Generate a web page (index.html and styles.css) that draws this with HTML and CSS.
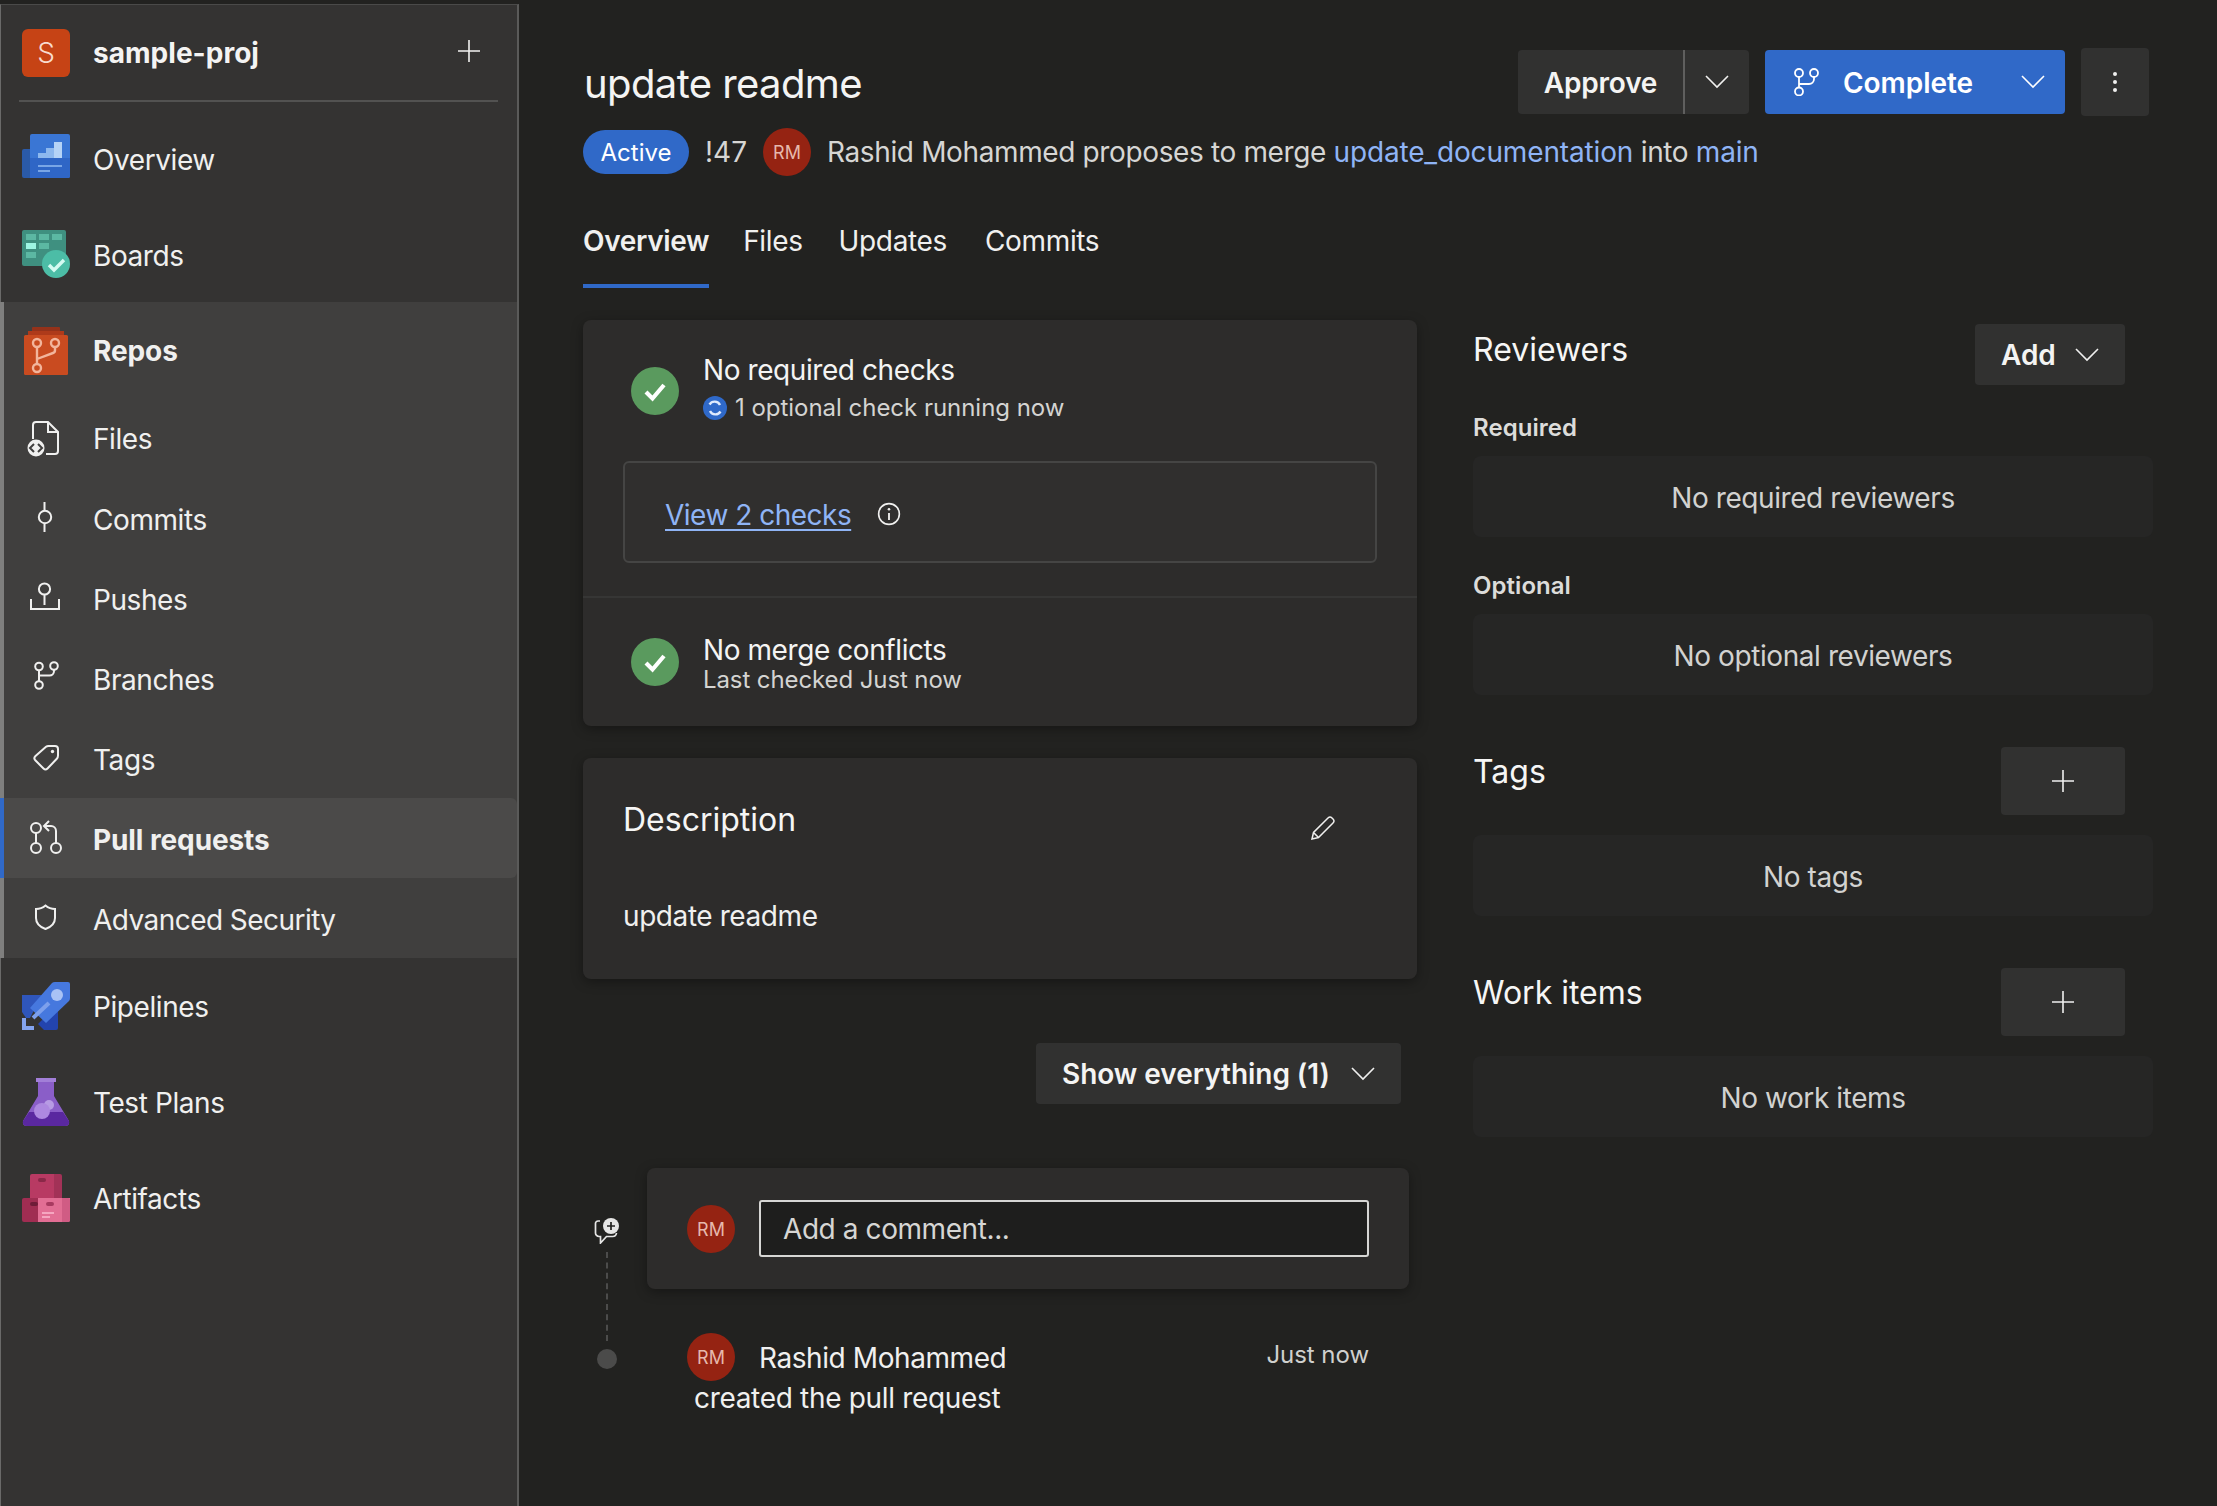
FILE: index.html
```html
<!DOCTYPE html>
<html lang="en">
<head>
<meta charset="utf-8">
<title>update readme</title>
<link rel="stylesheet" href="styles.css">
</head>
<body>
<div class="app">
  <nav class="sidebar">
    <div class="project">
      <div class="logo">S</div>
      <div class="project-name">sample-proj</div>
      <svg class="project-add" viewBox="0 0 24 24"><path d="M12 1v22M1 12h22" stroke="#f2f2f1" stroke-width="1.6" fill="none"/></svg>
    </div>
    <div class="nav-top">
      <a class="nav-row"><svg class="ic" viewBox="0 0 48 48"><path d="M2 15h7v29H2a2 2 0 0 1-2-2V17a2 2 0 0 1 2-2z" fill="#2a5aa8"/><rect x="8" y="0" width="40" height="44" rx="2" fill="#3a76d4"/><path d="M8 24h40v18a2 2 0 0 1-2 2H8z" fill="#2f66c6"/><path d="M16 19h8v5h-8zM24 14h8v10h-8z" fill="#8db8ee"/><path d="M32 8h8v16h-8z" fill="#b5d3f6"/><path d="M16 31h24v2H16z" fill="#79a6e6"/><path d="M16 36h12v2H16z" fill="#79a6e6"/></svg><span>Overview</span></a>
      <a class="nav-row"><svg class="ic" viewBox="0 0 48 48"><rect x="0" y="0" width="44" height="36" rx="2" fill="#3f9080"/><path d="M4 4h10v6H4zM17 4h10v6H17zM30 4h10v6H30zM17 13h10v6H17zM4 22h10v6H4z" fill="#5cb8a3"/><path d="M4 13h10v6H4z" fill="#9ef5e3"/><circle cx="34" cy="34" r="14" fill="#4cbda6"/><path d="M27 35l5 5 10-10" fill="none" stroke="#d4fbf2" stroke-width="3.4"/></svg><span>Boards</span></a>
    </div>
    <div class="nav-section">
      <a class="nav-row head"><svg class="ic" viewBox="0 0 48 48"><path d="M10 1a1 1 0 0 1 1-1h26a1 1 0 0 1 1 1v5H10z" fill="#94321a"/><path d="M6 4h36v4H6z" fill="#ae3a1a"/><rect x="2" y="8" width="44" height="40" rx="1.5" fill="#c94b20"/><g fill="none" stroke="#f2b59c" stroke-width="2.4"><circle cx="15" cy="16" r="4"/><circle cx="33" cy="16" r="4"/><circle cx="15" cy="41" r="4"/><path d="M15 20v17M33 20v3a3 3 0 0 1-2 3l-16 6"/></g></svg><span>Repos</span></a>
      <a class="nav-row sub files"><svg class="ic" viewBox="0 0 48 48"><path d="M11 24V10a3 3 0 0 1 3-3h12l10 10v19a3 3 0 0 1-3 3h-9M26 7v10h10" fill="none" stroke="#f0f0ef" stroke-width="2"/><circle cx="14" cy="33" r="8.5" fill="#f0f0ef"/><path d="M12 29l-4 4 4 4M16 29l4 4-4 4" fill="none" stroke="#403f3e" stroke-width="2"/></svg><span>Files</span></a>
      <a class="nav-row sub"><svg class="ic" viewBox="0 0 48 48"><circle cx="23" cy="23" r="6.2" fill="none" stroke="#f0f0ef" stroke-width="2"/><path d="M22.5 8v9M22.5 29v9" stroke="#f0f0ef" stroke-width="2"/></svg><span>Commits</span></a>
      <a class="nav-row sub"><svg class="ic" viewBox="0 0 48 48"><circle cx="22.5" cy="15" r="5.6" fill="none" stroke="#f0f0ef" stroke-width="2"/><path d="M22.5 21v10M9 25v10h28V25" fill="none" stroke="#f0f0ef" stroke-width="2"/></svg><span>Pushes</span></a>
      <a class="nav-row sub"><svg class="ic" viewBox="0 0 48 48"><g fill="none" stroke="#f0f0ef" stroke-width="2"><circle cx="17" cy="12.5" r="3.8"/><circle cx="32" cy="12" r="3.8"/><circle cx="17" cy="31" r="3.8"/><path d="M17 16.500v10.700M32 16v1a4.500 4.500 0 0 1-4.500 4.500H17"/></g></svg><span>Branches</span></a>
      <a class="nav-row sub"><svg class="ic" viewBox="0 0 48 48"><path d="M13.500 22L24 12.800q1-.8 2.500-.8H33q3 0 3 3v6.500q0 2-1.200 3.300L25.500 34.500q-2 2-4 0l-8.200-8.200q-2-2.200.2-4.300z" fill="none" stroke="#f0f0ef" stroke-width="2"/><circle cx="30.500" cy="17.500" r="1.700" fill="#f0f0ef"/></svg><span>Tags</span></a>
      <a class="nav-row sub active"><svg class="ic" viewBox="0 0 48 48"><g fill="none" stroke="#f0f0ef" stroke-width="2"><circle cx="14" cy="14" r="5"/><circle cx="14" cy="34" r="5"/><circle cx="34" cy="34" r="5"/><path d="M14 19v10M34 29V17a5 5 0 0 0-5-5h-7M27 7l-5 5 5 5"/></g></svg><span>Pull requests</span></a>
      <a class="nav-row sub security"><svg class="ic" viewBox="0 0 48 48"><path d="M23.500 11.500c3 2.500 6 3.500 9.500 3.500v9c0 5-4 9-9.500 11-5.500-2-9.500-6-9.500-11v-9c3.500 0 6.500-1 9.500-3.500z" fill="none" stroke="#f0f0ef" stroke-width="2"/></svg><span>Advanced Security</span></a>
    </div>
    <div class="nav-bottom">
      <a class="nav-row"><svg class="ic" viewBox="0 0 48 48"><path d="M0 13h20L8 36H4L0 30z" fill="#2f56bb"/><path d="M36 22v24a2 2 0 0 1-2 2H22l-6-6z" fill="#2344ae"/><path d="M30 1q1-1 3-1h13q2 0 2 2v14q0 2-1 3L24 41 8 26z" fill="#4678de"/><circle cx="35" cy="13" r="6" fill="#a9c2f5"/><path d="M11 36l16-15" stroke="#7da0ec" stroke-width="4"/><path d="M0 36h4v8h8v4H0z" fill="#84a4ee"/></svg><span>Pipelines</span></a>
      <a class="nav-row"><svg class="ic" viewBox="0 0 48 48"><path d="M16 3h16v15l15 25q1 5-4 5H5q-5 0-4-5l15-25z" fill="#8a5ec8"/><path d="M7 34h34l6 9q1 5-4 5H5q-5 0-4-5z" fill="#5a28a0"/><rect x="14" y="0" width="20" height="4" fill="#a27fd8"/><circle cx="27" cy="27" r="5" fill="#b79be4"/><circle cx="20" cy="33" r="8" fill="#ad88e0"/></svg><span>Test Plans</span></a>
      <a class="nav-row"><svg class="ic" viewBox="0 0 48 48"><path d="M10 0h24v24H8V2a2 2 0 0 1 2-2z" fill="#b83a63"/><path d="M32 0h6a2 2 0 0 1 2 2v22h-8z" fill="#a23257"/><rect x="16" y="4" width="8" height="4" rx="2" fill="#8a2848"/><path d="M2 24h15v24H2a2 2 0 0 1-2-2V26a2 2 0 0 1 2-2z" fill="#a02d52"/><path d="M16 24h32v22a2 2 0 0 1-2 2H16z" fill="#e26e94"/><path d="M40 24h6a2 2 0 0 1 2 2v20a2 2 0 0 1-2 2h-6z" fill="#d05c84"/><rect x="8" y="28" width="8" height="4" rx="2" fill="#6e1c38"/><rect x="24" y="28" width="8" height="4" rx="2" fill="#a83a60"/><path d="M20 38h12v2H20zM20 42h8v2h-8z" fill="#f5a6c0"/></svg><span>Artifacts</span></a>
    </div>
  </nav>

  <main class="main">
    <header class="pr-head">
      <h1 class="pr-title">update readme</h1>
      <div class="actions">
        <div class="btn split">
          <span class="split-main"><span class="nudge">Approve</span></span>
          <span class="split-caret"><svg class="chev" viewBox="0 0 24 14"><path d="M1 1l11 11L23 1" fill="none" stroke="#f0f0ef" stroke-width="1.600"/></svg></span>
        </div>
        <div class="btn primary">
          <svg class="branch" viewBox="0 0 25 28"><g fill="none" stroke="#fff" stroke-width="1.800"><circle cx="5" cy="5" r="4"/><circle cx="20" cy="5" r="4"/><circle cx="5" cy="23.500" r="4"/><path d="M5 9v10.500M20 9v2a5 5 0 0 1-5 5H5"/></g></svg>
          <span class="primary-label"><span class="nudge">Complete</span></span>
          <svg class="chev" viewBox="0 0 24 14"><path d="M1 1l11 11L23 1" fill="none" stroke="#fff" stroke-width="1.600"/></svg>
        </div>
        <div class="btn more"><svg class="dots" viewBox="0 0 6 24"><circle cx="3" cy="4" r="2" fill="#f0f0ef"/><circle cx="3" cy="12" r="2" fill="#f0f0ef"/><circle cx="3" cy="20" r="2" fill="#f0f0ef"/></svg></div>
      </div>
    </header>

    <div class="pr-meta">
      <span class="badge">Active</span>
      <span class="pr-id">!47</span>
      <span class="avatar">RM</span>
      <span class="pr-desc">Rashid Mohammed proposes to merge <a class="link">update_documentation</a> into <a class="link">main</a></span>
    </div>

    <div class="tabs">
      <a class="tab current">Overview</a>
      <a class="tab t-files">Files</a>
      <a class="tab t-updates">Updates</a>
      <a class="tab t-commits">Commits</a>
    </div>

    <div class="columns">
      <section class="left">
        <div class="card checks">
          <div class="checks-top">
            <div class="status-row">
              <svg class="ok" viewBox="0 0 48 48"><circle cx="24" cy="24" r="24" fill="#5a9a5e"/><path d="M15 25l6.500 6.500L33 18" fill="none" stroke="#fff" stroke-width="4.200"/></svg>
              <div>
                <div class="status-title">No required checks</div>
                <div class="status-sub"><svg class="spin" viewBox="0 0 24 24"><circle cx="12" cy="12" r="12" fill="#2f69c9"/><path d="M17 9a6 6 0 0 0-10.500-.5M7 15a6 6 0 0 0 10.500.5" fill="none" stroke="#dfeafd" stroke-width="2.400"/></svg>1 optional check running now</div>
              </div>
            </div>
            <div class="checks-box">
              <a class="view-link">View 2 checks</a>
              <svg class="info" viewBox="0 0 22 22"><circle cx="11" cy="11" r="9.500" fill="none" stroke="#f0f0ef" stroke-width="1.500"/><path d="M11 10v6.500" stroke="#f0f0ef" stroke-width="1.700"/><circle cx="11" cy="6.700" r="1.200" fill="#f0f0ef"/></svg>
            </div>
          </div>
          <div class="status-row merge">
            <svg class="ok up" viewBox="0 0 48 48"><circle cx="24" cy="24" r="24" fill="#5a9a5e"/><path d="M15 25l6.500 6.500L33 18" fill="none" stroke="#fff" stroke-width="4.200"/></svg>
            <div>
              <div class="status-title tight">No merge conflicts</div>
              <div class="status-sub tight">Last checked Just now</div>
            </div>
          </div>
        </div>

        <div class="card description">
          <div class="desc-head">
            <h2 class="heading">Description</h2>
            <svg class="pencil" viewBox="0 0 26 26"><path d="M2 24l1.500-6.500L18 3q2-2 4 0l1 1q2 2 0 4L8.500 22.500zM3.500 17.500l5 5" fill="none" stroke="#f0f0ef" stroke-width="1.500"/></svg>
          </div>
          <p class="desc-text">update readme</p>
        </div>

        <div class="filter-row">
          <div class="btn filter"><span>Show everything (1)</span><svg class="chev" viewBox="0 0 24 14"><path d="M1 1l11 11L23 1" fill="none" stroke="#f0f0ef" stroke-width="1.600"/></svg></div>
        </div>

        <div class="timeline">
          <div class="rail">
            <svg class="rail-icon" viewBox="0 0 26 26"><path d="M6 3H4a2.500 2.500 0 0 0-2.500 2.500V15A3.500 3.500 0 0 0 5 18.500h1.500V25l6-6.500h6a4 4 0 0 0 4-3.500" fill="none" stroke="#e6e6e5" stroke-width="1.700"/><circle cx="17" cy="8" r="8" fill="#e6e6e5"/><path d="M17 4v8M13 8h8" stroke="#222220" stroke-width="1.700"/></svg>
            <div class="rail-line"></div>
            <div class="rail-dot"></div>
          </div>
          <div class="thread">
            <div class="card comment">
              <span class="avatar">RM</span>
              <div class="comment-input">Add a comment...</div>
            </div>
            <div class="activity">
              <div class="activity-top">
                <span class="avatar">RM</span>
                <span class="activity-name">Rashid Mohammed</span>
                <span class="activity-time">Just now</span>
              </div>
              <div class="activity-text">created the pull request</div>
            </div>
          </div>
        </div>
      </section>

      <aside class="right">
        <div class="side-head">
          <h2 class="heading side-title">Reviewers</h2>
          <div class="btn add"><span>Add</span><svg class="chev" viewBox="0 0 24 14"><path d="M1 1l11 11L23 1" fill="none" stroke="#f0f0ef" stroke-width="1.600"/></svg></div>
        </div>
        <div class="side-label">Required</div>
        <div class="empty first">No required reviewers</div>
        <div class="side-label later">Optional</div>
        <div class="empty first">No optional reviewers</div>

        <div class="side-head block">
          <h2 class="heading side-title small">Tags</h2>
          <div class="btn plus"><svg class="plus-ic" viewBox="0 0 24 24"><path d="M12 1v22M1 12h22" stroke="#f0f0ef" stroke-width="1.600"/></svg></div>
        </div>
        <div class="empty">No tags</div>

        <div class="side-head block">
          <h2 class="heading side-title small">Work items</h2>
          <div class="btn plus"><svg class="plus-ic" viewBox="0 0 24 24"><path d="M12 1v22M1 12h22" stroke="#f0f0ef" stroke-width="1.600"/></svg></div>
        </div>
        <div class="empty">No work items</div>
      </aside>
    </div>
  </main>
</div>
</body>
</html>
```

FILE: styles.css
```css
* { box-sizing: border-box; }
html, body { margin: 0; height: 100%; }
body {
  background: #222220;
  color: #f0f0ef;
  font-family: Inter, "Liberation Sans", sans-serif;
  font-size: 28px;
  letter-spacing: -0.42px;
  overflow: hidden;
}
.app {
  display: grid;
  grid-template-columns: 519px 1fr;
  height: 1506px;
  padding-top: 4px;
  background: #222220;
}

/* sidebar */
.sidebar {
  background: #343332;
  border-top: 1px solid #4a4a49;
  border-left: 1px solid #6a6a69;
  border-right: 2px solid #5a5a59;
  display: flex;
  flex-direction: column;
  height: 1502px;
}
.project {
  display: flex;
  align-items: center;
  height: 97px;
  margin: 0 19px 0 18px;
  padding-left: 3px;
  border-bottom: 2px solid #525251;
}
.logo {
  width: 48px;
  height: 48px;
  border-radius: 6px;
  background: #c64315;
  color: #f8dccf;
  font-weight: 300;
  font-size: 28px;
  letter-spacing: 0;
  display: flex;
  align-items: center;
  justify-content: center;
}
.project-name {
  flex: 1;
  font-weight: 700;
  font-size: 28px;
  letter-spacing: 0.03px;
  margin-left: 23px;
  color: #f4f4f3;
}
.project-add { width: 24px; height: 24px; margin-right: 17px; margin-bottom: 3px; }
.nav-top { padding-top: 8px; }
.nav-row {
  display: flex;
  align-items: center;
  height: 96px;
  padding-left: 21px;
  gap: 23px;
  color: #f0f0ef;
}
.nav-row span { margin-top: 3px; }
.ic { width: 48px; height: 48px; flex: none; }
.nav-section {
  background: #403f3e;
  height: 656px;
  border-left: 4px solid #7f7f7e;
  margin-left: -1px;
}
.nav-section .nav-row { padding-left: 18px; }
.nav-row.head { height: 98px; font-weight: 700; letter-spacing: -0.1px; }
.nav-row.head span { margin-top: 0; }
.nav-row.sub { height: 80px; }
.nav-row.files { height: 78px; }
.nav-row.files span { margin-top: 0; }
.nav-row.security { letter-spacing: -0.55px; }
.nav-row.active {
  background: #4b4a49;
  font-weight: 700;
  letter-spacing: -0.1px;
  margin-left: -4px;
  border-left: 4px solid #3069c8;
  border-radius: 0 6px 6px 0;
}
.nav-bottom { padding-top: 0; }
.nav-bottom .nav-row span { margin-top: 1px; }

/* header */
.main { padding: 44px 68px 0 64px; min-width: 0; }
.pr-head { display: flex; justify-content: space-between; height: 68px; }
.pr-title {
  margin: 2px 0 0 1px;
  font-size: 40px;
  font-weight: 400;
  line-height: 68px;
  color: #f4f4f3;
  letter-spacing: -0.6px;
}
.actions { display: flex; gap: 16px; }
.btn {
  display: flex;
  align-items: center;
  background: #313130;
  border-radius: 4px;
  font-weight: 600;
  letter-spacing: -0.05px;
  color: #f4f4f3;
}
.nudge { display: block; margin-top: 2px; }
.split { height: 64px; width: 231px; margin-top: 2px; }
.split-main { width: 167px; height: 100%; display: flex; align-items: center; justify-content: center; border-right: 2px solid #5f5f5e; letter-spacing: -0.2px; }
.split-caret { flex: 1; display: flex; justify-content: center; }
.chev { width: 24px; height: 14px; flex: none; }
.primary { background: #3069c8; width: 300px; height: 64px; margin-top: 2px; padding-left: 29px; color: #fff; }
.branch { width: 25px; height: 28px; flex: none; }
.primary-label { margin-left: 24px; flex: 1; }
.primary .chev { margin-right: 20px; }
.more { width: 68px; height: 68px; justify-content: center; }
.dots { width: 6px; height: 24px; }

.pr-meta { display: flex; align-items: center; margin-top: 12px; height: 48px; }
.badge {
  background: #3069c8;
  border-radius: 22px;
  height: 44px;
  width: 106px;
  display: flex;
  align-items: center;
  justify-content: center;
  font-size: 24px;
  letter-spacing: 0;
  color: #fff;
}
.pr-id { margin-left: 16px; width: 58px; color: #d6d6d4; letter-spacing: 0; }
.avatar {
  width: 48px;
  height: 48px;
  border-radius: 50%;
  background: #952312;
  color: #e6b8ac;
  font-size: 18px;
  letter-spacing: 0;
  display: flex;
  align-items: center;
  justify-content: center;
  flex: none;
}
.pr-desc { margin-left: 16px; color: #d6d6d4; white-space: nowrap; letter-spacing: -0.37px; }
.link { color: #8fb4f5; letter-spacing: -0.15px; }

.tabs { display: flex; margin-top: 20px; letter-spacing: -0.35px; }
.tab {
  line-height: 38px;
  padding: 26px 0 24px;
  border-bottom: 4px solid transparent;
  color: #f0f0ef;
}
.tab.current { font-weight: 600; border-bottom-color: #3069c8; }
.t-files { margin-left: 34px; }
.t-updates { margin-left: 36px; }
.t-commits { margin-left: 38px; }

.columns {
  display: grid;
  grid-template-columns: 834px 680px;
  gap: 56px;
  margin-top: 32px;
  align-items: start;
}

/* left column */
.card {
  background: #2d2c2b;
  border-radius: 8px;
  box-shadow: 0 3px 12px rgba(0, 0, 0, 0.35);
}
.checks { height: 406px; }
.checks-top { height: 278px; padding-top: 30px; border-bottom: 2px solid #363635; }
.status-row { display: flex; padding-left: 48px; gap: 24px; }
.ok { width: 48px; height: 48px; margin-top: 17px; flex: none; }
.status-title { line-height: 40px; color: #f4f4f3; }
.status-sub {
  line-height: 36px;
  font-size: 24px;
  letter-spacing: -0.03px;
  color: #d4d4d2;
  display: flex;
  align-items: center;
}
.spin { width: 24px; height: 24px; margin-right: 8px; }
.checks-box {
  margin: 35px 40px 0;
  height: 102px;
  border: 2px solid #454544;
  border-radius: 6px;
  background: #302f2e;
  display: flex;
  align-items: center;
  padding: 5px 0 0 40px;
  gap: 26px;
  letter-spacing: -0.5px;
}
.view-link { color: #8fb4f5; text-decoration: underline; text-underline-offset: 4px; }
.info { width: 24px; height: 24px; margin-top: -2px; }
.merge { padding-top: 37px; align-items: center; }
.ok.up { margin-top: 0; margin-bottom: 6px; }
.tight { line-height: 30px; }
.status-sub.tight { letter-spacing: -0.1px; }
.description { margin-top: 32px; height: 221px; padding: 40px 40px 0; }
.desc-head { display: flex; justify-content: space-between; }
.heading { margin: 0; font-size: 32px; font-weight: 400; letter-spacing: 0; line-height: 44px; color: #f6f6f5; }
.pencil { width: 26px; height: 26px; margin: 17px 41px 0 0; }
.desc-text { margin: 54px 0 0; line-height: 40px; }
.filter-row { display: flex; justify-content: flex-end; margin: 64px 16px 0 0; }
.filter { height: 61px; width: 365px; padding-left: 26px; justify-content: space-between; padding-right: 26px; }
.timeline { display: flex; margin-top: 64px; }
.rail { width: 48px; margin-right: 16px; padding-top: 50px; display: flex; flex-direction: column; align-items: center; }
.rail-icon { width: 26px; height: 26px; flex: none; }
.rail-line { width: 0; height: 89px; margin-top: 8px; border-left: 2px dashed #4c4c4b; }
.rail-dot { width: 20px; height: 20px; margin-top: 8px; border-radius: 50%; background: #4b4b4a; }
.thread { width: 762px; }
.comment { display: flex; height: 121px; padding: 32px 40px; gap: 24px; align-items: flex-start; }
.comment .avatar { margin-top: 5px; }
.comment-input {
  flex: 1;
  height: 57px;
  background: #1e1e1d;
  border: 2px solid #d6d6d4;
  border-radius: 3px;
  padding-left: 22px;
  display: flex;
  align-items: center;
  color: #d6d6d4;
}
.activity { padding: 44px 40px 0; }
.activity-top { display: flex; align-items: center; gap: 24px; height: 48px; }
.activity-name { flex: 1; color: #f0f0ef; margin-top: 2px; }
.activity-time { font-size: 24px; letter-spacing: -0.05px; color: #d0d0ce; margin-top: -6px; }
.activity-text { margin-left: 7px; line-height: 40px; margin-top: -3px; color: #f0f0ef; letter-spacing: -0.32px; }

/* right column */
.side-head { display: flex; justify-content: space-between; align-items: flex-start; padding-right: 28px; }
.side-head.block { margin-top: 52px; }
.side-title { line-height: 60px; }
.side-title.small { line-height: 50px; }
.add { height: 61px; width: 150px; margin-top: 4px; padding: 0 26px; justify-content: space-between; }
.side-label { margin-top: 27px; font-size: 24px; font-weight: 600; letter-spacing: 0.05px; line-height: 32px; color: #dcdcda; }
.side-label.later { margin-top: 33px; }
.empty {
  height: 81px;
  margin-top: 20px;
  padding-top: 2px;
  border-radius: 8px;
  background: #262625;
  display: flex;
  align-items: center;
  justify-content: center;
  color: #d2d2d0;
}
.empty.first { margin-top: 12px; }
.plus { width: 124px; height: 68px; justify-content: center; }
.plus-ic { width: 24px; height: 24px; }
```
